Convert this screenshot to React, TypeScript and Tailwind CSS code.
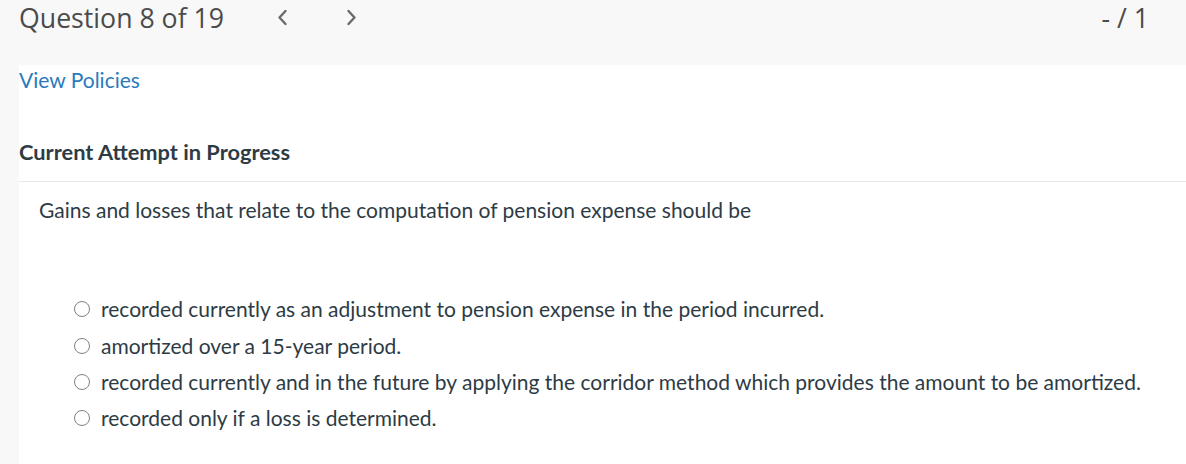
import React from "react";

const options = [
  "recorded currently as an adjustment to pension expense in the period incurred.",
  "amortized over a 15-year period.",
  "recorded currently and in the future by applying the corridor method which provides the amount to be amortized.",
  "recorded only if a loss is determined.",
];

function Chevron({ dir }: { dir: "left" | "right" }) {
  return (
    <svg width="11" height="17" viewBox="0 0 11 17" fill="none">
      <path
        d={dir === "left" ? "M8.5 2 L2.5 8.5 L8.5 15" : "M2.5 2 L8.5 8.5 L2.5 15"}
        stroke="#6b6b6b"
        strokeWidth="2.4"
        strokeLinecap="round"
        strokeLinejoin="round"
      />
    </svg>
  );
}

export default function App() {
  return (
    <div className="w-[1186px] h-[464px] overflow-hidden bg-[#f8f8f8]" style={{ fontFamily: "Lato, 'Noto Sans', sans-serif" }}>
      <div className="h-[65px] flex items-start pl-[19px] pr-[37px] pt-0">
        <div className="text-[26.7px] leading-[35px] text-[#4b4b4b]" style={{ fontFamily: "'Open Sans', sans-serif" }}>
          Question 8 of 19
        </div>
        <div className="flex items-center gap-[58px] ml-[53px] h-[35px]">
          <Chevron dir="left" />
          <Chevron dir="right" />
        </div>
        <div className="ml-auto text-[26.7px] leading-[35px] text-[#4b4b4b]" style={{ fontFamily: "'Open Sans', sans-serif" }}>
          - / 1
        </div>
      </div>
      <div className="flex h-[399px]">
        <div className="w-[19px] shrink-0" />
        <div className="flex-1 bg-white">
          <div className="text-[21px] leading-[30px] text-[#2b7abc]">View Policies</div>
          <div className="mt-[42px] pb-[14px] border-b border-[#e8e8e8] text-[21.8px] leading-[30px] font-bold text-[#2d3b45]">
            Current Attempt in Progress
          </div>
          <div className="mt-[13px] pl-[20px] text-[21px] leading-[30px] text-[#2d3b45]">
            Gains and losses that relate to the computation of pension expense should be
          </div>
          <div className="mt-[66px] pl-[55px]">
            {options.map((o) => (
              <div key={o} className="h-[36.4px] flex items-center text-[21px] leading-[30px] text-[#2d3b45]">
                <span className="w-[16px] h-[16px] rounded-full border-[1.6px] border-[#7f7f7f] shrink-0 mr-[11px]" />
                <span>{o}</span>
              </div>
            ))}
          </div>
        </div>
      </div>
    </div>
  );
}
